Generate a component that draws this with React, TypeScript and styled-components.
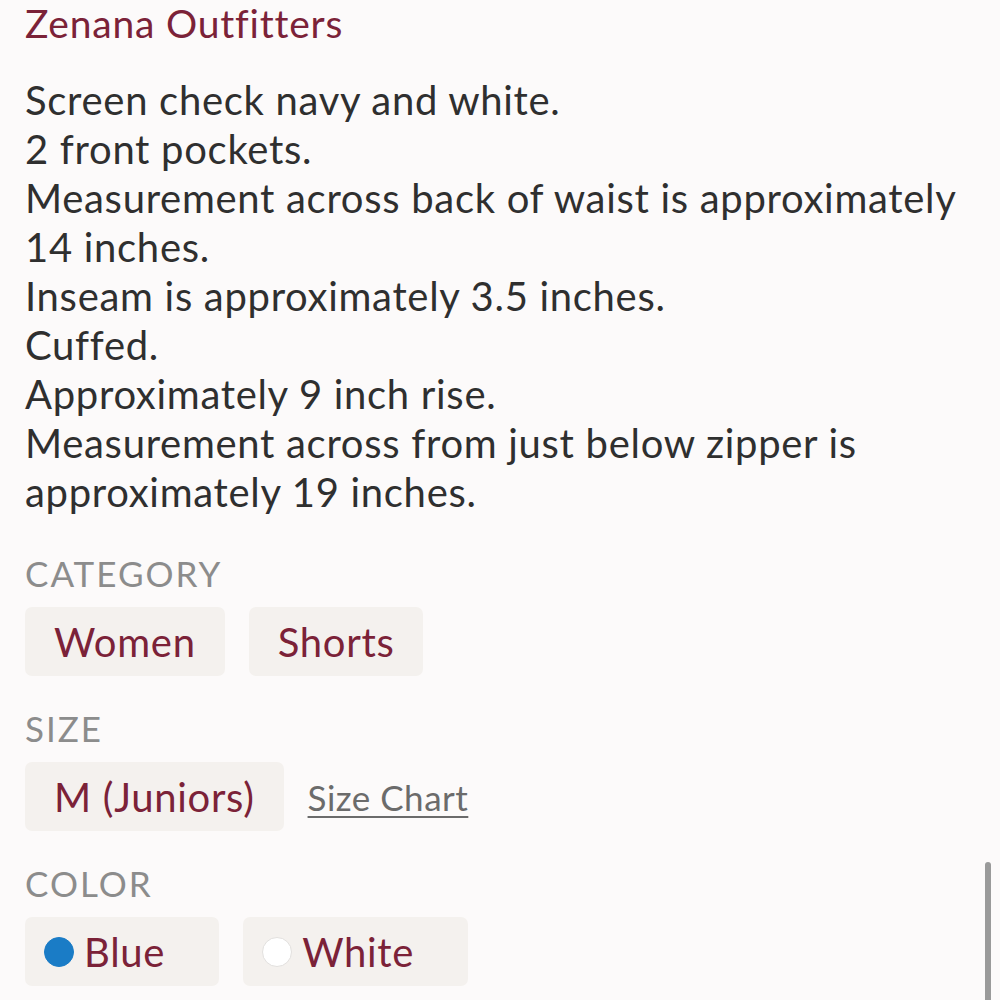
import React from "react";
import styled, { createGlobalStyle } from "styled-components";

const Global = createGlobalStyle`
  html, body { margin: 0; padding: 0; background: #fcfafa; overflow: hidden; }
  body { font-family: Lato, "Open Sans", sans-serif; }
`;

const Page = styled.div`
  height: 1000px;
  box-sizing: border-box;
  padding: 0 26px 0 25px;
  display: flex;
  flex-direction: column;
  overflow: hidden;
`;

const Brand = styled.h1`
  margin: 0;
  font-weight: 400;
  font-size: 39px;
  letter-spacing: 0.8px;
  line-height: 46px;
  color: #7b2238;
`;

const Description = styled.p`
  margin: 30px 0 0;
  font-size: 40px;
  letter-spacing: 0.7px;
  line-height: 49px;
  color: #2f2f2f;
`;

const Section = styled.section<{ $top: number }>`
  display: flex;
  flex-direction: column;
  gap: 14px;
  margin-top: ${(p) => p.$top}px;
`;

const Label = styled.div`
  font-size: 35px;
  letter-spacing: 2px;
  line-height: 40px;
  color: #8c8c8c;
  text-transform: uppercase;
`;

const Row = styled.div`
  display: flex;
  align-items: center;
  gap: 24px;
`;

const Chip = styled.div`
  display: flex;
  align-items: center;
  gap: 10px;
  height: 69px;
  box-sizing: border-box;
  padding: 0 29px;
  background: #f4f1ee;
  border-radius: 7px;
  font-size: 40px;
  letter-spacing: 0.7px;
  color: #7b2238;
`;

const ColorChip = styled(Chip)`
  padding: 0 54px 0 19px;
`;

const Dot = styled.span<{ $c: string; $b: string }>`
  width: 30px;
  height: 30px;
  border-radius: 50%;
  background: ${(p) => p.$c};
  border: 1px solid ${(p) => p.$b};
  box-sizing: border-box;
  flex: none;
`;

const Link = styled.a`
  font-size: 35px;
  letter-spacing: 0.5px;
  color: #6b6b6b;
  text-decoration: underline;
  text-underline-offset: 5px;
  text-decoration-thickness: 2px;
`;

const Scrollbar = styled.div`
  position: fixed;
  right: 9px;
  top: 862px;
  width: 6px;
  height: 160px;
  border-radius: 3px;
  background: #9a9a9a;
`;

export default function App() {
  return (
    <>
      <Global />
      <Page>
        <Brand>Zenana Outfitters</Brand>
        <Description>
          Screen check navy and white.
          <br />2 front pockets.
          <br />Measurement across back of waist is approximately 14 inches.
          <br />Inseam is approximately 3.5 inches.
          <br />Cuffed.
          <br />Approximately 9 inch rise.
          <br />Measurement across from just below zipper is approximately 19 inches.
        </Description>
        <Section $top={36}>
          <Label>Category</Label>
          <Row>
            <Chip>Women</Chip>
            <Chip>Shorts</Chip>
          </Row>
        </Section>
        <Section $top={32}>
          <Label>Size</Label>
          <Row>
            <Chip>M (Juniors)</Chip>
            <Link>Size Chart</Link>
          </Row>
        </Section>
        <Section $top={32}>
          <Label>Color</Label>
          <Row>
            <ColorChip>
              <Dot $c="#1a7cc6" $b="#1a7cc6" />
              Blue
            </ColorChip>
            <ColorChip>
              <Dot $c="#ffffff" $b="#e2e0de" />
              White
            </ColorChip>
          </Row>
        </Section>
      </Page>
      <Scrollbar />
    </>
  );
}
